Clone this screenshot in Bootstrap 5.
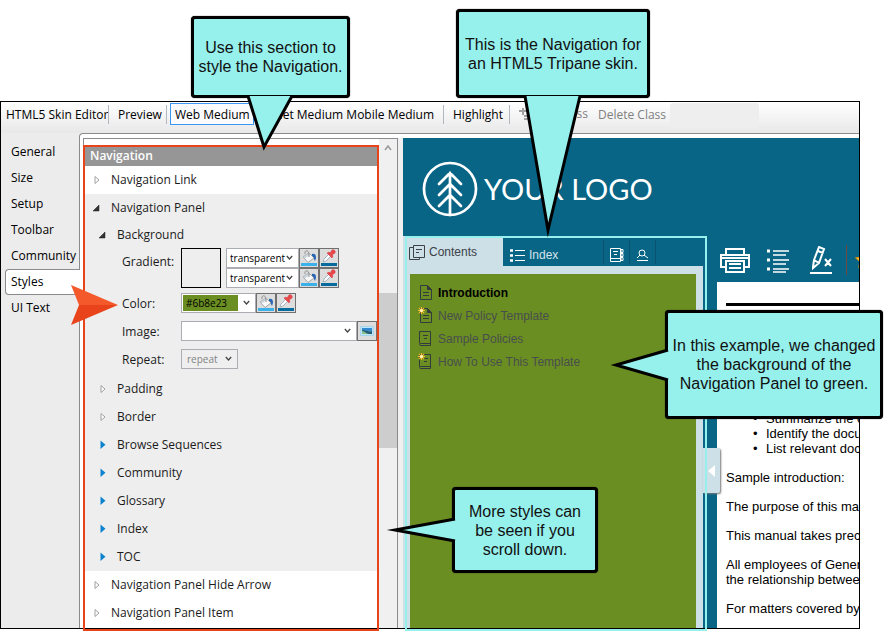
<!DOCTYPE html>
<html lang="en">
<head>
<meta charset="utf-8">
<meta name="viewport" content="width=device-width, initial-scale=1">
<title>HTML5 Skin Editor</title>
<link href="https://cdn.jsdelivr.net/npm/bootstrap@5.3.0/dist/css/bootstrap.min.css" rel="stylesheet">
<style>
:root { --ink:#1b1b1b; --blue:#086586; --pale:#cddfe7; --olive:#6b8e23; --cyan:#96f0ec; --red:#e8431b; --line:#8a8a8f; }
body { background:#fff; color:#000; font-family:"Open Sans","Noto Sans",sans-serif; font-size:12px; line-height:16px; }
button, select { font-family:inherit; border-radius:0; }
svg { display:block; flex:none; }
.stage { padding:101px 32px 10px 0; }
.app-window { border:1px solid #000; background:#ececec; }

.tool-strip { height:31px; background:linear-gradient(#fff,#e8e8e8); white-space:nowrap; overflow:hidden; padding-top:1px; }
.tool-btn { border:1px solid transparent; background:none; padding:0 4px; height:22px; line-height:22px; color:#000; text-align:left; flex:none; }
.tool-btn.active { border-color:#3b97f5; background:#fbfbfd; }
.tool-btn:disabled { color:#808080; }
.tool-sep { width:1px; height:19px; margin:2px 4px 0; background:#b3b7c2; flex:none; }
.tool-blank { width:89px; height:25px; border-radius:3px; background:#eee; flex:none; }
.w-editor { width:103px; }
.w-preview { width:49px; }
.w-web { width:84px; margin-left:-1px; }
.w-tablet { width:87px; }
.w-mobile { width:98px; }
.w-highlight { width:57px; }
.w-add { width:79px; }
.w-delete { width:77px; }

.side-tabs { width:78px; flex:none; padding-top:6px; }
.side-tabs button { display:block; border:0; background:none; text-align:left; height:26px; padding:0 0 0 10px; width:100%; color:#000; }
.side-tabs button.active { background:#fff; border:1px solid var(--line); border-right:0; border-radius:4px 0 0 4px; margin-left:4px; width:75px; padding-left:5px; position:relative; }
.pane { background:#fff; border:solid var(--line); border-width:1px 0 0 1px; border-top-left-radius:4px; padding:4px 0 0 3px; min-width:0; }
.props { width:315px; flex:none; border:solid var(--line); border-width:1px 1px 0 1px; }
.prop-list { width:295px; padding:8px 0 1px; flex:none; }
.prop-head { background:#969696; color:#fff; height:19px; line-height:18px; padding-left:6px; font-size:12px; margin:0; font-weight:600; }
.prop-row { height:28px; display:flex; align-items:center; border:0; background:none; width:100%; padding:0 0 0 9px; text-align:left; color:var(--ink); }
.prop-row svg { margin-right:10px; }
.prop-row.inner { padding-left:15px; }
.prop-row.short { height:26px; }
.group { background:#eee; }
.field { display:grid; grid-template-columns:59px 1fr; padding-left:38px; margin-bottom:8px; color:var(--ink); align-items:center; }
.field label { padding-top:2px; }
.field.top { align-items:start; margin-bottom:5px; }
.field.top label { padding-top:6px; }
.field.last { margin-bottom:6px; }
.swatch { width:40px; height:40px; border:1px solid #000; margin-right:5px; }
.combo { appearance:none; height:20px; border:1px solid #abadb3; font-size:10px; line-height:16px; padding:0 14px 1px 3px; color:#000; background:#fff url("data:image/svg+xml,%3Csvg xmlns='http://www.w3.org/2000/svg' width='7' height='6'%3E%3Cpath d='M.8 1l2.7 3L6.200 1' fill='none' stroke='%23444' stroke-width='1.300'/%3E%3C/svg%3E") no-repeat right 5px top 6px; }
.combo.shade { width:73px; padding-right:10px; }
.combo.hue { width:75px; padding-left:4px; background-image:linear-gradient(var(--olive),var(--olive)),url("data:image/svg+xml,%3Csvg xmlns='http://www.w3.org/2000/svg' width='7' height='6'%3E%3Cpath d='M.8 1l2.7 3L6.200 1' fill='none' stroke='%23444' stroke-width='1.300'/%3E%3C/svg%3E"); background-size:55px 16px,7px 6px; background-position:left 1px top 1px,right 5px top 6px; background-repeat:no-repeat; }
.combo.file { width:176px; }
.combo.tile { width:57px; background-color:#efefef; color:#838383; padding-left:5px; opacity:1; }
.pick { width:20px; height:20px; border:1px solid #707070; background:#ddd; padding:0; overflow:hidden; }
.red-frame { border:2px solid var(--red); inset:6px 0 -3px -1px; pointer-events:none; }
.scroller { background:#f0f0f0; padding-top:6px; }
.thumb { height:155px; margin-top:142px; background:#cdcdcd; }
.gutter { width:5px; background:#f0f0f0; flex:none; }

.preview { background:var(--blue); min-width:0; }
.brand { height:98px; padding:3px 0 0 19px; color:#fff; }
.brand span { font:400 29px/32px Lato,sans-serif; margin-left:6px; }
.skin-nav { width:300px; flex:none; font-family:"Liberation Sans",Arial,sans-serif; background:var(--pale); }
.skin-tabs { background:var(--blue); height:30px; }
.skin-tabs button { border:0; background:none; color:#d5e3ea; padding:0; display:flex; align-items:center; }
.skin-tabs .contents-tab { width:100px; background:var(--pale); color:#3c4248; padding:2px 0 0 6px; }
.skin-tabs .later { height:24px; margin-top:4px; border-right:1px solid #085270; justify-content:center; width:26px; padding-top:6px; }
.skin-tabs .index-tab { width:101px; justify-content:flex-start; padding-left:7px; }
.toc { background:var(--olive); margin:8px 7px 0; padding:7px 0 0 8px; }
.toc a { display:flex; align-items:center; height:23px; font-size:12px; color:#484e4c; text-decoration:none; }
.toc a.current { color:#000; font-weight:700; }
.toc svg { margin-right:5px; }
.nav-span { left:0; width:300px; pointer-events:none; }
.cyan-frame { border:2px solid var(--cyan); inset:0 -4px -3px 2px; z-index:2; }
.doc-side { padding-left:14px; min-width:0; }
.doc-tools { height:46px; padding:2px 0 0 3px; overflow:hidden; }
.doc-tools > * { flex:none; }
.doc-tools button { border:0; background:none; padding:0; }
.tool-rule { width:1px; height:30px; background:#6b4a42; }
.doc { background:#fff; font-family:"Liberation Sans",Arial,sans-serif; font-size:13px; line-height:15px; padding:21px 0 0 9px; white-space:nowrap; overflow:hidden; }
.doc hr { border:0; height:3px; background:#000; opacity:1; margin:0 0 105px; }
.doc ul { margin:0 0 14px; padding-left:40px; list-style:none; }
.doc li::before { content:"•"; display:inline-block; width:13px; margin-left:-13px; }
.doc p { margin:0 0 14px; }
.hide-tab { left:300px; top:212px; width:17px; height:45px; background:var(--pale); border:0; box-shadow:1px 1px 2px #777; border-radius:0 2px 2px 0; padding:0 0 0 5px; }

.callout { position:absolute; z-index:5; display:flex; align-items:center; justify-content:center; text-align:center; background:var(--cyan); border:3px solid #000; border-radius:4px; box-shadow:0 0 1px #000; font:16px/19px "Liberation Sans",Arial,sans-serif; color:#111; white-space:nowrap; }
.callout svg { position:absolute; overflow:visible; fill:var(--cyan); stroke:#000; stroke-width:3; stroke-miterlimit:12; }
.c-section { left:191px; top:16px; width:159px; height:82px; }
.c-section svg { left:54px; top:76px; }
.c-skin { left:456px; top:9px; width:194px; height:89px; }
.c-skin svg { left:65px; top:83px; }
.c-green { left:665px; top:310px; width:218px; height:109px; }
.c-green svg { left:-56px; top:36px; }
.c-more { left:452px; top:487px; width:146px; height:86px; }
.c-more svg { left:-66px; top:28px; }
.pointer { left:70px; top:284px; z-index:4; }
</style>
<script src="https://cdn.jsdelivr.net/npm/bootstrap@5.3.0/dist/js/bootstrap.bundle.min.js"></script>
</head>
<body>
<svg width="0" height="0" class="position-absolute" aria-hidden="true">
  <symbol id="closed" viewBox="0 0 8 10"><path d="M2 1.500v7L6 5z" fill="#fff" stroke="#a0a0a0"/></symbol>
  <symbol id="more" viewBox="0 0 8 10"><path d="M1.500 .5v8.500L6.500 4.800z" fill="#0d83cf"/></symbol>
  <symbol id="open" viewBox="0 0 8 10"><path d="M6 2v6H0z" fill="#333" stroke="#222" stroke-width=".5"/></symbol>
  <symbol id="bucket" viewBox="0 0 18 18">
    <rect x="1" y="14" width="16" height="3" fill="#3bb1ea"/>
    <path d="M12 5c4-1 5 3 3 7-1-1-1-4-3-5z" fill="#2865b5"/>
    <path d="M3 8l6-4 5 5-6 4.500z" fill="#f7f7f7" stroke="#8a9096" stroke-width=".8"/>
    <path d="M3 8l6-4 1.500 1.500-6 4z" fill="#c9d3da"/>
    <path d="M5 5c-1-4 4-5 4 1v2" fill="none" stroke="#888" stroke-width=".9"/>
  </symbol>
  <symbol id="dropper" viewBox="0 0 18 18">
    <rect x="1" y="14" width="16" height="3" fill="#086b9d"/>
    <path d="M3 13l1-3 5-5 2 2-5 5z" fill="#f7fbff" stroke="#9aa6b3" stroke-width=".8"/>
    <path d="M7 4l2-1 1 1 2-3c2-1 4 1 3 3l-3 2 1 1-1 2z" fill="#e8474c" stroke="#d0393e" stroke-width=".5"/>
  </symbol>
  <symbol id="page" viewBox="0 0 15 17"><path d="M2.500 1.500h7l4 4v10h-11zM9.500 1.500v4h4" fill="none" stroke="#343b3c"/><path d="M9.500 1.500v4h4z" fill="#343b3c"/><path d="M5 8.500h6M5 11.500h6" stroke="#343b3c"/></symbol>
  <symbol id="book" viewBox="0 0 15 17"><path d="M1.500 13.500V1.500h11v14h-10c-1 0-1-2 0-2h10" fill="none" stroke="#343b3c"/><path d="M5 5.500h5M6 8.500h3" stroke="#343b3c"/></symbol>
  <symbol id="new" viewBox="0 0 8 8"><path d="M4 0v8M0 4h8M1 1l6 6M7 1L1 7" stroke="#f5b928" stroke-width="1.300"/><circle cx="4" cy="4" r="1.800" fill="#fff6bb"/></symbol>
</svg>

<main class="stage position-relative">
  <div class="app-window">
    <div class="tool-strip d-flex" role="toolbar" aria-label="Editor">
      <button class="tool-btn w-editor">HTML5 Skin Editor</button><span class="tool-sep"></span>
      <button class="tool-btn w-preview">Preview</button><span class="tool-sep"></span>
      <button class="tool-btn active w-web">Web Medium</button>
      <button class="tool-btn text-end w-tablet">Tablet Medium</button>
      <button class="tool-btn text-end w-mobile">Mobile Medium</button><span class="tool-sep"></span>
      <button class="tool-btn w-highlight">Highlight</button><span class="tool-sep"></span>
      <button class="tool-btn w-add d-flex align-items-center justify-content-between" disabled><svg width="14" height="14" fill="none" stroke="#a0a0a0" stroke-width="2"><path d="M4 1v7M0 4h9M5 9h7M5 12h7"/></svg>Add Class</button>
      <button class="tool-btn text-end w-delete" disabled>Delete Class</button>
      <span class="tool-blank"></span>
    </div>
    <div class="d-flex">
      <nav class="side-tabs" aria-label="Skin sections">
        <button>General</button><button>Size</button><button>Setup</button><button>Toolbar</button><button>Community</button><button class="active" aria-current="true">Styles</button><button>UI Text</button>
      </nav>
      <div class="pane d-flex flex-fill">
        <section class="props d-flex">
          <div class="prop-list position-relative">
            <h2 class="prop-head">Navigation</h2>
            <button class="prop-row"><svg width="8" height="10"><use href="#closed"/></svg>Navigation Link</button>
            <div class="group">
              <button class="prop-row" aria-expanded="true"><svg width="8" height="10"><use href="#open"/></svg>Navigation Panel</button>
              <button class="prop-row inner short" aria-expanded="true"><svg width="8" height="10"><use href="#open"/></svg>Background</button>
              <div class="field top"><label for="g1">Gradient:</label>
                <div class="d-flex"><div class="swatch"></div>
                  <div>
                    <div class="d-flex"><select id="g1" class="combo shade"><option>transparent</option></select><button class="pick" aria-label="Fill"><svg width="18" height="18"><use href="#bucket"/></svg></button><button class="pick" aria-label="Pick color"><svg width="18" height="18"><use href="#dropper"/></svg></button></div>
                    <div class="d-flex"><select aria-label="Gradient end" class="combo shade"><option>transparent</option></select><button class="pick" aria-label="Fill"><svg width="18" height="18"><use href="#bucket"/></svg></button><button class="pick" aria-label="Pick color"><svg width="18" height="18"><use href="#dropper"/></svg></button></div>
                  </div>
                </div>
              </div>
              <div class="field"><label for="col">Color:</label><div class="d-flex"><select id="col" class="combo hue"><option>#6b8e23</option></select><button class="pick" aria-label="Fill"><svg width="18" height="18"><use href="#bucket"/></svg></button><button class="pick" aria-label="Pick color"><svg width="18" height="18"><use href="#dropper"/></svg></button></div></div>
              <div class="field"><label for="img">Image:</label><div class="d-flex"><select id="img" class="combo file"><option></option></select><button class="pick" aria-label="Browse image"><svg width="18" height="18"><path d="M2.500 4.500h13v9h-13z" fill="#bce7fa" stroke="#a9d4ec"/><path d="M4 6h10v3H4z" fill="#328bce"/><path d="M4 8c4 0 5 2 10 1v3H4z" fill="#265d75"/><path d="M4 9c3 0 4 3 7 3H4z" fill="#8ac38d"/></svg></button></div></div>
              <div class="field last"><label for="rep">Repeat:</label><select id="rep" class="combo tile" disabled><option>repeat</option></select></div>
              <button class="prop-row inner"><svg width="8" height="10"><use href="#closed"/></svg>Padding</button>
              <button class="prop-row inner"><svg width="8" height="10"><use href="#closed"/></svg>Border</button>
              <button class="prop-row inner"><svg width="8" height="10"><use href="#more"/></svg>Browse Sequences</button>
              <button class="prop-row inner"><svg width="8" height="10"><use href="#more"/></svg>Community</button>
              <button class="prop-row inner"><svg width="8" height="10"><use href="#more"/></svg>Glossary</button>
              <button class="prop-row inner"><svg width="8" height="10"><use href="#more"/></svg>Index</button>
              <button class="prop-row inner"><svg width="8" height="10"><use href="#more"/></svg>TOC</button>
            </div>
            <button class="prop-row"><svg width="8" height="10"><use href="#closed"/></svg>Navigation Panel Hide Arrow</button>
            <button class="prop-row"><svg width="8" height="10"><use href="#closed"/></svg>Navigation Panel Item</button>
            <div class="red-frame position-absolute"></div>
          </div>
          <div class="scroller flex-fill"><svg class="mx-auto" width="8" height="6" fill="none" stroke="#9a9a9a" stroke-width="1.500"><path d="M1 5l3-4 3 4"/></svg><div class="thumb"></div></div>
        </section>
        <div class="gutter"></div>
        <section class="preview flex-fill d-flex flex-column">
          <div class="brand d-flex align-items-center">
            <svg width="56" height="56" fill="none" stroke="#fff" stroke-width="2.700" stroke-linecap="round"><circle cx="28" cy="28" r="26"/><path d="M28 54V12M17 23l11-11 11 11M17 34l11-11 11 11M17 45l11-11 11 11"/></svg>
            <span>YOUR LOGO</span>
          </div>
          <div class="d-flex flex-fill position-relative">
            <div class="skin-nav d-flex flex-column">
              <div class="skin-tabs d-flex">
                <button class="contents-tab"><svg width="16" height="17" class="me-1" fill="none" stroke="#3c4248"><path d="M4.500 1.500h11v12h-11zM4 3.500H.5v12h10v-2M7 5.500h6M7 8.500h3"/></svg>Contents</button>
                <button class="later index-tab"><svg width="15" height="13" class="me-1" fill="none" stroke="#fff"><path d="M5 1.500h10M5 6.500h10M5 11.500h10"/><path d="M0 1.500h3M0 6.500h3M0 11.500h3" stroke-width="2.500"/></svg>Index</button>
                <button class="later" aria-label="Glossary"><svg width="15" height="16" fill="none" stroke="#fff"><path d="M1.500 1.500h10v13h-10zM2 11.500h9M4 4.500h5M5 7.500h3M12 2.500h2v3h-2zM12 6.500h2v3h-2zM12 10.500h2v3h-2z"/></svg></button>
                <button class="later" aria-label="Search"><svg width="13" height="12" fill="none" stroke="#fff"><circle cx="6" cy="4" r="3"/><path d="M8 6l4 3M4 6L1 9M1 11.500h11" /></svg></button>
              </div>
              <div class="toc flex-fill">
                <a class="current" href="#"><svg width="15" height="17"><use href="#page"/></svg>Introduction</a>
                <a href="#"><svg width="15" height="17"><use href="#page"/><use href="#new" width="7" height="7"/></svg>New Policy Template</a>
                <a href="#"><svg width="15" height="17"><use href="#book"/></svg>Sample Policies</a>
                <a href="#"><svg width="15" height="17"><use href="#book"/><use href="#new" width="7" height="7"/></svg>How To Use This Template</a>
              </div>
            </div>
            <div class="doc-side flex-fill d-flex flex-column">
              <div class="doc-tools d-flex align-items-center">
                <button aria-label="Print"><svg width="30" height="25" fill="none" stroke="#fff" stroke-width="2"><path d="M6 7V1h18v6M6 19H1V7h28v12h-5M6 13h18v11H6zM1 10h28M9 16h12M9 20h12" /></svg></button>
                <button class="ms-3" aria-label="Contents"><svg width="28" height="25" fill="none" stroke="#fff" stroke-width="1.500"><path d="M7 3h16M7 7h13M7 12h16M7 16h13M7 21h16M7 24h13"/><path d="M1 3h3M1 12h3M1 21h3" stroke-width="3"/></svg></button>
                <button class="ms-3" aria-label="Remove highlight"><svg width="28" height="28" fill="none" stroke="#fff" stroke-width="2"><path d="M3 21l1-7L9 1l5 2-5 14-6 5zM4 14l5 3M8 5l5 2M15 13l6 7M21 13l-6 7"/><path d="M0 27h22"/></svg></button>
                <span class="tool-rule ms-2"></span>
                <button class="ms-2" aria-label="Favorite"><svg width="20" height="18"><path d="M9 1l2.500 5 6 .8-4.300 4 1 6L9 14l-5.200 2.800 1-6L.5 6.800l6-.8z" fill="#ffbd2e" stroke="#d58a00"/></svg></button>
              </div>
              <article class="doc flex-fill">
                <hr>
                <ul><li>Summarize the content</li><li>Identify the documents</li><li>List relevant documents</li></ul>
                <p>Sample introduction:</p>
                <p>The purpose of this manual</p>
                <p>This manual takes precedence</p>
                <p>All employees of General<br>the relationship between</p>
                <p class="mb-0">For matters covered by</p>
              </article>
            </div>
            <button class="hide-tab position-absolute" aria-label="Hide navigation"><svg width="7" height="12"><path d="M7 0v12L0 6z" fill="#fff"/></svg></button>
            <div class="nav-span position-absolute top-0 bottom-0"><div class="cyan-frame position-absolute"></div></div>
          </div>
        </section>
      </div>
    </div>
  </div>

  <svg class="pointer position-absolute" width="50" height="42"><path d="M1 1l47 20H9z" fill="#f4592b"/><path d="M1 41l47-20H9z" fill="#e8431b"/></svg>
  <div class="callout c-section"><span>Use this section to<br>style the Navigation.</span><svg width="45" height="56"><path d="M0 1l16 51L44 1"/></svg></div>
  <div class="callout c-skin"><span>This is the Navigation for<br>an HTML5 Tripane skin.</span><svg width="56" height="140"><path d="M1 1l23 134L56 1" /></svg></div>
  <div class="callout c-green"><span>In this example, we changed<br>the background of the<br>Navigation Panel to green.</span><svg width="56" height="32"><path d="M56 1L4 16l52 15"/></svg></div>
  <div class="callout c-more"><span>More styles can<br>be seen if you<br>scroll down.</span><svg width="66" height="24"><path d="M66 1L6 12l60 11"/></svg></div>
</main>
</body>
</html>
